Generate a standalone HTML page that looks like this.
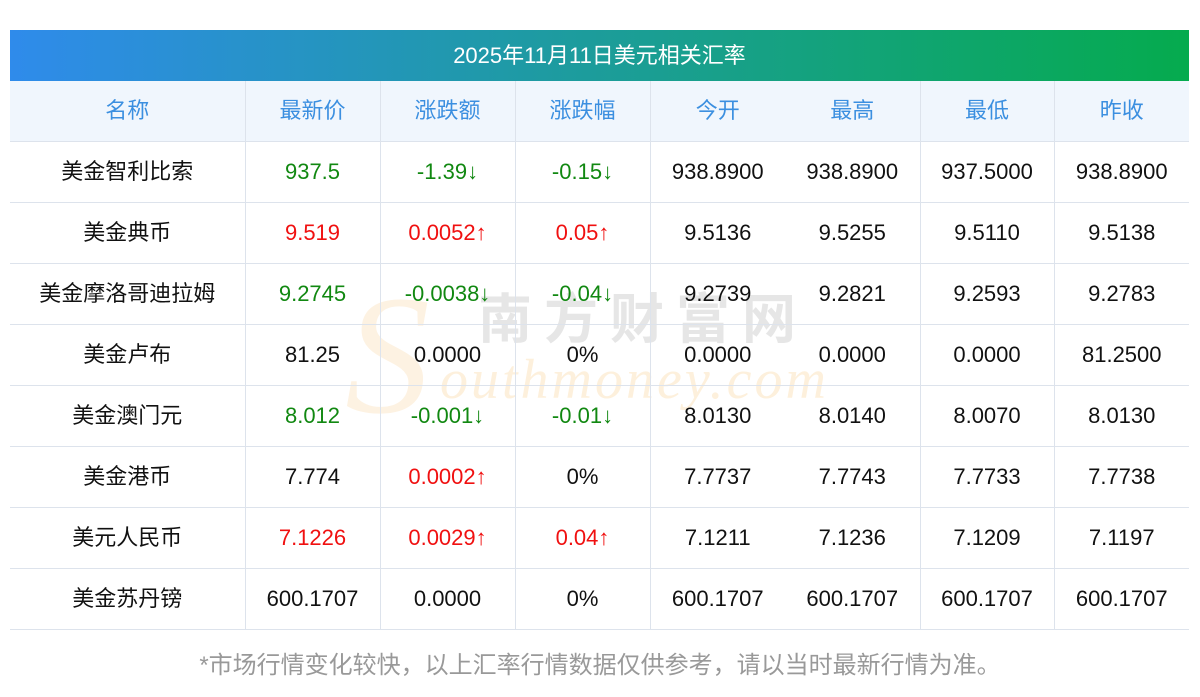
<!DOCTYPE html>
<html><head><meta charset="utf-8"><style>
body{margin:0;background:#fff;font-family:"Liberation Sans","Noto Sans CJK SC",sans-serif;width:1200px;height:697px;position:relative;overflow:hidden}
.title{position:absolute;left:10px;top:30px;width:1179px;height:51px;background:linear-gradient(90deg,#2f8beb,#18a08a 60%,#05ab4e);color:#fff;font-size:22px;line-height:51px;text-align:center}
table{position:absolute;left:10px;top:81px;width:1179px;border-collapse:collapse;table-layout:fixed}
td{height:60px;border:1px solid #dde3ec;text-align:center;font-size:22px;line-height:22px;color:#111;padding:0}
tr td:first-child{border-left:none}
tr td:last-child{border-right:none}
tr td:nth-child(5){border-right:none}
tr td:nth-child(6){border-left:none}
tr.h td{background:#f0f6fd;color:#3b8fe0;border-top:none}
.g{color:#118811}.r{color:#f01010}
.wm{position:absolute;pointer-events:none}
.foot{position:absolute;left:0;width:1200px;top:650px;text-align:center;font-size:24px;line-height:32px;color:#999}
</style></head><body>
<div class="title">2025年11月11日美元相关汇率</div>
<div class="wm" style="left:345px;top:270px;font-family:'Liberation Serif',serif;font-style:italic;font-size:170px;color:#fdf2e2;line-height:170px">S</div>
<div class="wm" style="left:478px;top:290px;font-size:54px;color:#e6e6e6;letter-spacing:12px;font-weight:bold;line-height:60px">南方财富网</div>
<div class="wm" style="left:440px;top:350px;font-family:'Liberation Serif',serif;font-style:italic;font-size:56px;color:#fdf0dc;letter-spacing:3px;line-height:60px">outhmoney.com</div>
<table>
<colgroup><col style="width:235px"><col style="width:135px"><col style="width:135px"><col style="width:135px"><col style="width:135px"><col style="width:135px"><col style="width:134px"><col style="width:135px"></colgroup>
<tr class="h"><td>名称</td><td>最新价</td><td>涨跌额</td><td>涨跌幅</td><td>今开</td><td>最高</td><td>最低</td><td>昨收</td></tr>
<tr><td>美金智利比索</td><td class="g">937.5</td><td class="g">-1.39↓</td><td class="g">-0.15↓</td><td>938.8900</td><td>938.8900</td><td>937.5000</td><td>938.8900</td></tr>
<tr><td>美金典币</td><td class="r">9.519</td><td class="r">0.0052↑</td><td class="r">0.05↑</td><td>9.5136</td><td>9.5255</td><td>9.5110</td><td>9.5138</td></tr>
<tr><td>美金摩洛哥迪拉姆</td><td class="g">9.2745</td><td class="g">-0.0038↓</td><td class="g">-0.04↓</td><td>9.2739</td><td>9.2821</td><td>9.2593</td><td>9.2783</td></tr>
<tr><td>美金卢布</td><td>81.25</td><td>0.0000</td><td>0%</td><td>0.0000</td><td>0.0000</td><td>0.0000</td><td>81.2500</td></tr>
<tr><td>美金澳门元</td><td class="g">8.012</td><td class="g">-0.001↓</td><td class="g">-0.01↓</td><td>8.0130</td><td>8.0140</td><td>8.0070</td><td>8.0130</td></tr>
<tr><td>美金港币</td><td>7.774</td><td class="r">0.0002↑</td><td>0%</td><td>7.7737</td><td>7.7743</td><td>7.7733</td><td>7.7738</td></tr>
<tr><td>美元人民币</td><td class="r">7.1226</td><td class="r">0.0029↑</td><td class="r">0.04↑</td><td>7.1211</td><td>7.1236</td><td>7.1209</td><td>7.1197</td></tr>
<tr><td>美金苏丹镑</td><td>600.1707</td><td>0.0000</td><td>0%</td><td>600.1707</td><td>600.1707</td><td>600.1707</td><td>600.1707</td></tr>
</table>
<div class="foot">*市场行情变化较快，以上汇率行情数据仅供参考，请以当时最新行情为准。</div>
</body></html>
